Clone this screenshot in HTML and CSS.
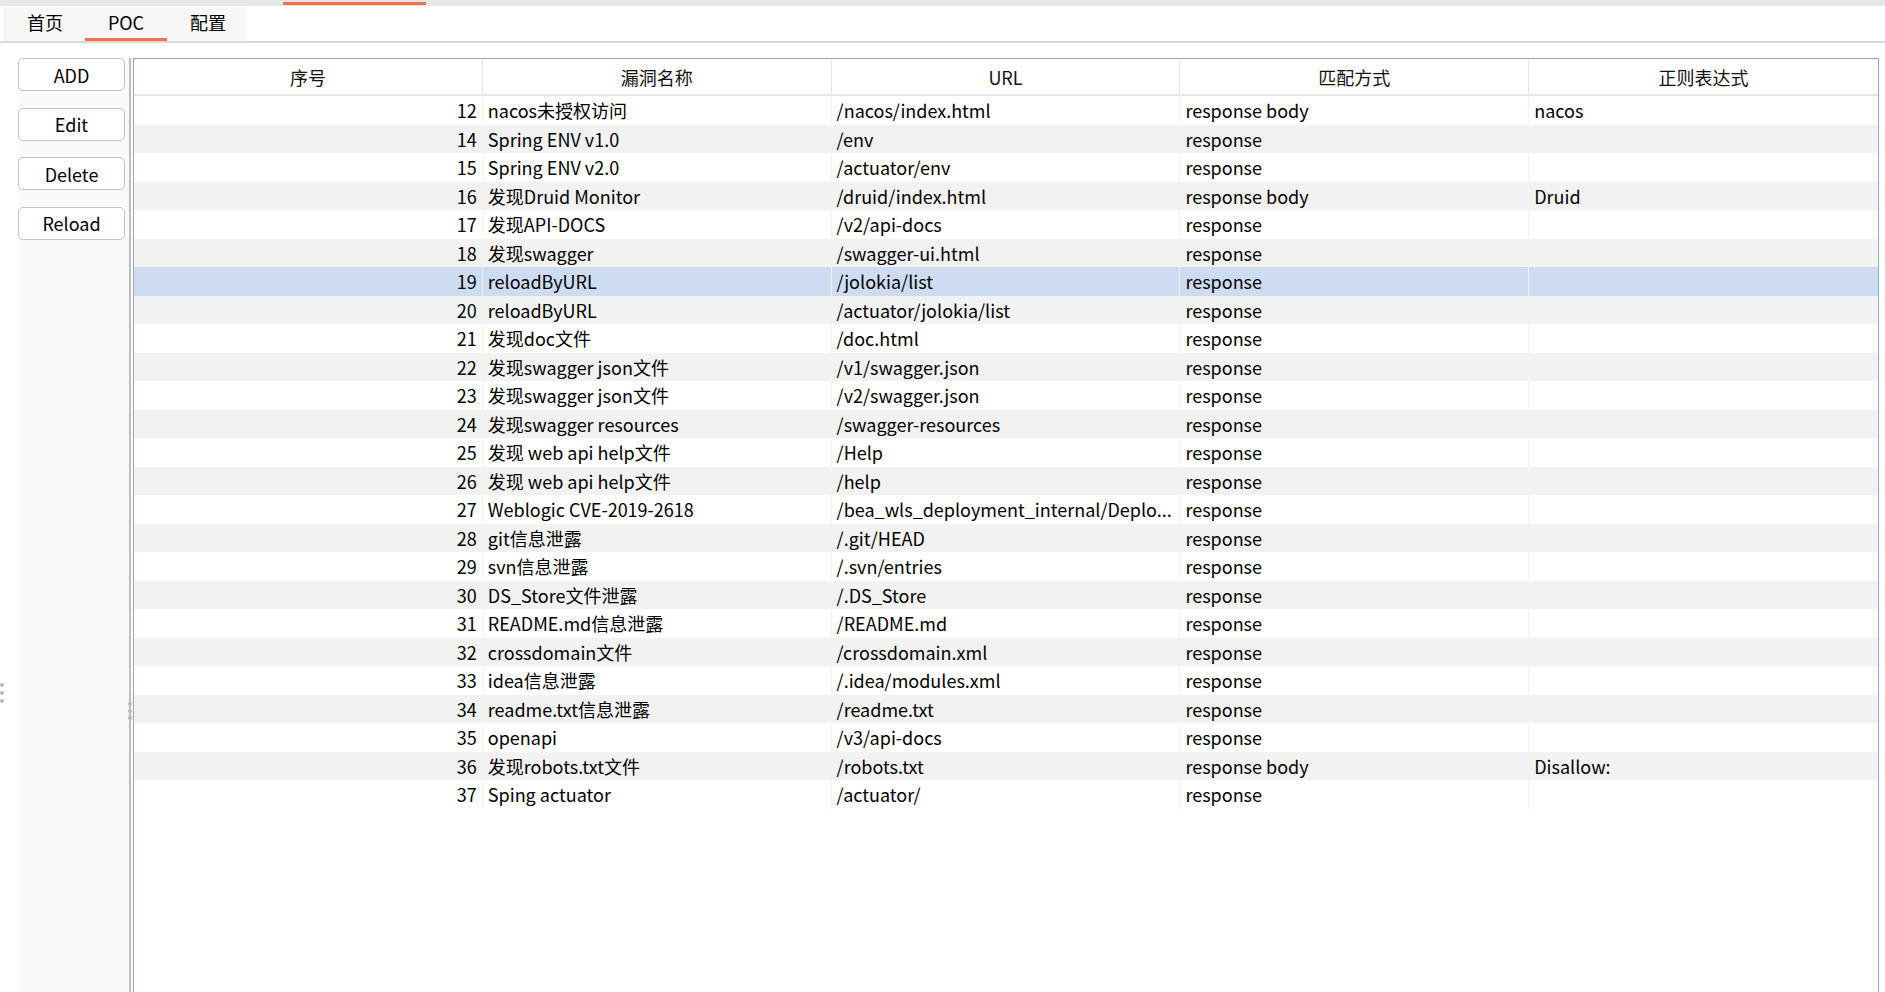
FILE: index.html
```html
<!DOCTYPE html>
<html lang="zh-CN">
<head>
<meta charset="utf-8">
<title>POC</title>
<link rel="stylesheet" href="styles.css">
</head>
<body>
<div class="topbar"><span class="top-indicator"></span></div>
<div class="tabbar">
  <div class="tabs">
    <div class="tab">首页</div>
    <div class="tab active">POC</div>
    <div class="tab">配置</div>
  </div>
</div>
<div class="main">
  <div class="edge-grip"><i></i><i></i><i></i></div>
  <div class="sidebar">
    <button class="btn">ADD</button>
    <button class="btn">Edit</button>
    <button class="btn">Delete</button>
    <button class="btn">Reload</button>
  </div>
  <div class="splitter"><div class="grip"><i></i><i></i><i></i></div></div>
  <div class="table">
    <div class="thead">
      <div class="th">序号</div>
      <div class="th">漏洞名称</div>
      <div class="th">URL</div>
      <div class="th">匹配方式</div>
      <div class="th">正则表达式</div>
    </div>
    <div class="tbody">
      <div class="tr"><div class="td num">12</div><div class="td">nacos未授权访问</div><div class="td">/nacos/index.html</div><div class="td">response body</div><div class="td">nacos</div></div>
      <div class="tr"><div class="td num">14</div><div class="td">Spring ENV v1.0</div><div class="td">/env</div><div class="td">response</div><div class="td"></div></div>
      <div class="tr"><div class="td num">15</div><div class="td">Spring ENV v2.0</div><div class="td">/actuator/env</div><div class="td">response</div><div class="td"></div></div>
      <div class="tr"><div class="td num">16</div><div class="td">发现Druid Monitor</div><div class="td">/druid/index.html</div><div class="td">response body</div><div class="td">Druid</div></div>
      <div class="tr"><div class="td num">17</div><div class="td">发现API-DOCS</div><div class="td">/v2/api-docs</div><div class="td">response</div><div class="td"></div></div>
      <div class="tr"><div class="td num">18</div><div class="td">发现swagger</div><div class="td">/swagger-ui.html</div><div class="td">response</div><div class="td"></div></div>
      <div class="tr selected"><div class="td num">19</div><div class="td">reloadByURL</div><div class="td">/jolokia/list</div><div class="td">response</div><div class="td"></div></div>
      <div class="tr"><div class="td num">20</div><div class="td">reloadByURL</div><div class="td">/actuator/jolokia/list</div><div class="td">response</div><div class="td"></div></div>
      <div class="tr"><div class="td num">21</div><div class="td">发现doc文件</div><div class="td">/doc.html</div><div class="td">response</div><div class="td"></div></div>
      <div class="tr"><div class="td num">22</div><div class="td">发现swagger json文件</div><div class="td">/v1/swagger.json</div><div class="td">response</div><div class="td"></div></div>
      <div class="tr"><div class="td num">23</div><div class="td">发现swagger json文件</div><div class="td">/v2/swagger.json</div><div class="td">response</div><div class="td"></div></div>
      <div class="tr"><div class="td num">24</div><div class="td">发现swagger resources</div><div class="td">/swagger-resources</div><div class="td">response</div><div class="td"></div></div>
      <div class="tr"><div class="td num">25</div><div class="td">发现 web api help文件</div><div class="td">/Help</div><div class="td">response</div><div class="td"></div></div>
      <div class="tr"><div class="td num">26</div><div class="td">发现 web api help文件</div><div class="td">/help</div><div class="td">response</div><div class="td"></div></div>
      <div class="tr"><div class="td num">27</div><div class="td">Weblogic CVE-2019-2618</div><div class="td">/bea_wls_deployment_internal/Deplo...</div><div class="td">response</div><div class="td"></div></div>
      <div class="tr"><div class="td num">28</div><div class="td">git信息泄露</div><div class="td">/.git/HEAD</div><div class="td">response</div><div class="td"></div></div>
      <div class="tr"><div class="td num">29</div><div class="td">svn信息泄露</div><div class="td">/.svn/entries</div><div class="td">response</div><div class="td"></div></div>
      <div class="tr"><div class="td num">30</div><div class="td">DS_Store文件泄露</div><div class="td">/.DS_Store</div><div class="td">response</div><div class="td"></div></div>
      <div class="tr"><div class="td num">31</div><div class="td">README.md信息泄露</div><div class="td">/README.md</div><div class="td">response</div><div class="td"></div></div>
      <div class="tr"><div class="td num">32</div><div class="td">crossdomain文件</div><div class="td">/crossdomain.xml</div><div class="td">response</div><div class="td"></div></div>
      <div class="tr"><div class="td num">33</div><div class="td">idea信息泄露</div><div class="td">/.idea/modules.xml</div><div class="td">response</div><div class="td"></div></div>
      <div class="tr"><div class="td num">34</div><div class="td">readme.txt信息泄露</div><div class="td">/readme.txt</div><div class="td">response</div><div class="td"></div></div>
      <div class="tr"><div class="td num">35</div><div class="td">openapi</div><div class="td">/v3/api-docs</div><div class="td">response</div><div class="td"></div></div>
      <div class="tr"><div class="td num">36</div><div class="td">发现robots.txt文件</div><div class="td">/robots.txt</div><div class="td">response body</div><div class="td">Disallow:</div></div>
      <div class="tr"><div class="td num">37</div><div class="td">Sping actuator</div><div class="td">/actuator/</div><div class="td">response</div><div class="td"></div></div>
    </div>
  </div>
</div>
</body>
</html>
```

FILE: styles.css
```css
* { box-sizing: border-box; }
html, body { height: 100%; }
body {
  margin: 0;
  background: #ffffff;
  font-family: "Noto Sans CJK SC", "Noto Sans", sans-serif;
  font-size: 18px;
  color: #000000;
  overflow: hidden;
}
.topbar {
  height: 6px;
  background: #e6e6e6;
  padding-left: 283px;
  padding-top: 2px;
}
.top-indicator {
  display: block;
  width: 143px;
  height: 3px;
  background: #f0714a;
}
.tabbar {
  height: 37px;
  border-bottom: 2px solid #d9d9d9;
  padding-left: 3px;
  padding-top: 1px;
}
.tabs {
  display: flex;
  width: 244px;
  height: 34px;
  background: #f7f7f7;
}
.tab {
  flex-shrink: 0;
  white-space: nowrap;
  height: 34px;
  line-height: 30px;
  padding: 0 22px 0 24px;
  font-size: 18px;
  color: #000;
}
.tab.active {
  width: 82px;
  padding: 0;
  text-align: center;
  border-bottom: 3px solid #f0714a;
}
.tab:last-child { padding: 0 0 0 23px; }
.main {
  display: flex;
  height: calc(100% - 43px);
  padding-top: 15px;
}
.edge-grip {
  width: 18px;
  display: flex;
  flex-direction: column;
  justify-content: flex-start;
  padding-top: 625px;
  gap: 4px;
}
.edge-grip i, .grip i {
  display: block;
  width: 4px;
  height: 4px;
  border-radius: 50%;
  background: #b8b8b8;
}
.sidebar {
  width: 111px;
  background: #fafafa;
  display: flex;
  flex-direction: column;
  gap: 16.67px;
}
.btn {
  width: 107px;
  height: 33px;
  background: #ffffff;
  border: 1px solid #c3c3c3;
  border-radius: 5px;
  font-family: "Noto Sans CJK SC", "Noto Sans", sans-serif;
  font-size: 18px;
  line-height: 26px;
  color: #000;
  padding: 0;
}
.splitter {
  width: 2px;
  background: #bdbdbd;
  margin-right: 2px;
  position: relative;
}
.grip {
  position: absolute;
  left: -1px;
  top: 644px;
  display: flex;
  flex-direction: column;
  gap: 3px;
}
.table {
  width: 1746px;
  border: 1px solid #8ea8c8;
  border-bottom: none;
  background: #ffffff;
}
.thead {
  display: grid;
  grid-template-columns: repeat(5, 1fr);
  height: 37px;
  border-bottom: 2px solid #e6e6e6;
}
.th {
  text-align: center;
  line-height: 37px;
  font-size: 18px;
  color: #111;
  border-right: 1px solid #e6e6e6;
}
.th:last-child { border-right: none; }
.tr {
  display: grid;
  grid-template-columns: repeat(5, 1fr);
  height: 28.5px;
}
.tr:nth-child(even) { background: #f2f2f2; }
.tr.selected { background: #cddcf0; }
.td {
  line-height: 28.5px;
  padding: 0 5px;
  white-space: nowrap;
  overflow: hidden;
  border-right: 1px solid #f3f3f3;
  font-size: 18px;
  color: #000;
}
.td:last-child { border-right: none; }
.td.num { text-align: right; }
```
